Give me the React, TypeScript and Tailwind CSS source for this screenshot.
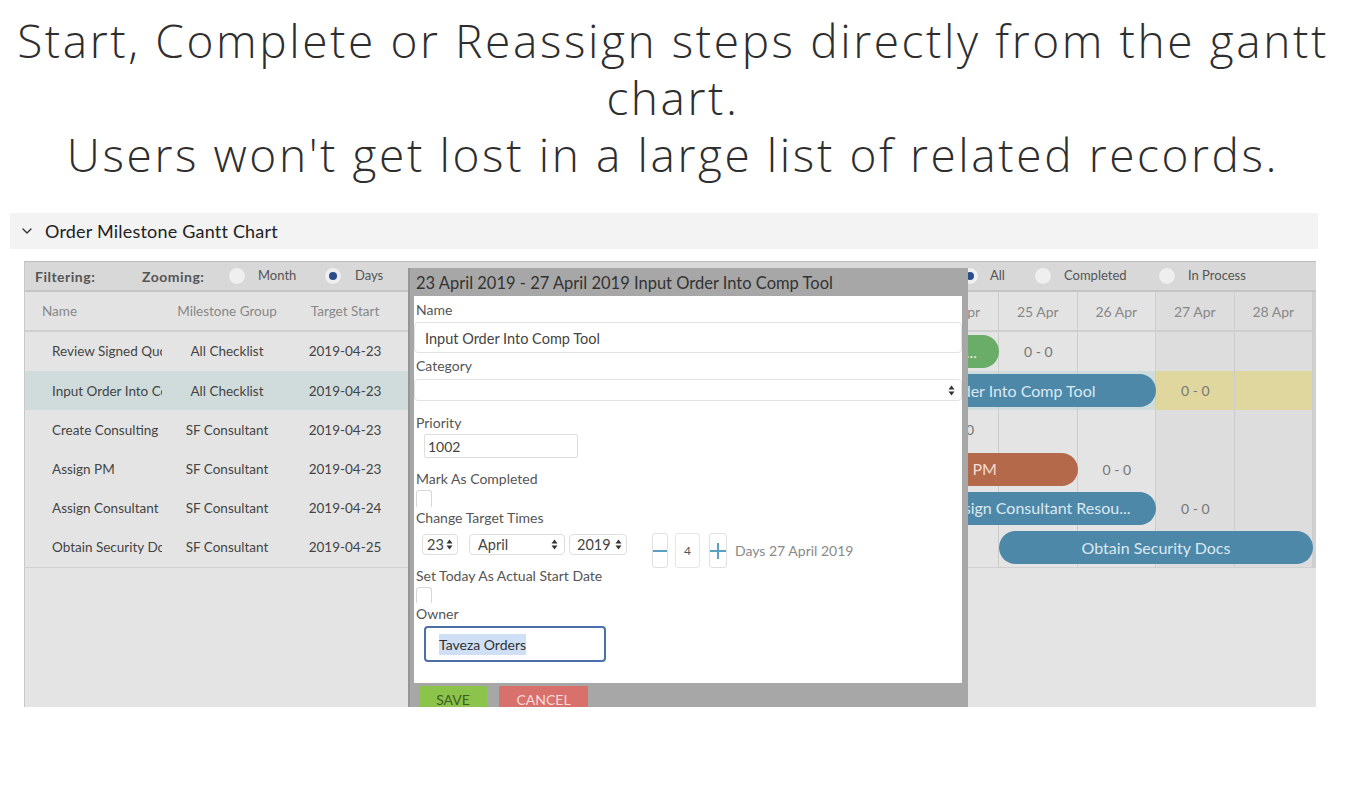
import { ChevronDown } from "lucide-react";

const rows = [
  { name: "Review Signed Quote", group: "All Checklist", start: "2019-04-23" },
  { name: "Input Order Into Comp Tool", group: "All Checklist", start: "2019-04-23" },
  { name: "Create Consulting Project", group: "SF Consultant", start: "2019-04-23" },
  { name: "Assign PM", group: "SF Consultant", start: "2019-04-23" },
  { name: "Assign Consultant Resources", group: "SF Consultant", start: "2019-04-24" },
  { name: "Obtain Security Docs", group: "SF Consultant", start: "2019-04-25" },
];

// col 1 = filler, col 2..11 = 19 Apr .. 28 Apr
const days = ["", "19 Apr", "20 Apr", "21 Apr", "22 Apr", "23 Apr", "24 Apr", "25 Apr", "26 Apr", "27 Apr", "28 Apr"];
const weekend = [false, false, true, true, false, false, false, false, false, true, true];

const colStart = ["", "col-start-1", "col-start-2", "col-start-3", "col-start-4", "col-start-5", "col-start-6", "col-start-7", "col-start-8", "col-start-9", "col-start-10", "col-start-11"];
const colSpan = ["", "col-span-1", "col-span-2", "col-span-3", "col-span-4", "col-span-5"];

type Bar = { start: number; span: number; color: string; text: string; label?: number };

const bars: Bar[] = [
  { start: 6, span: 2, color: "bg-[#6aad68] text-[#e3f1e2]", text: "Review Signed...", label: 8 },
  { start: 6, span: 4, color: "bg-[#4e88a8] text-[#dbe9f1]", text: "Input Order Into Comp Tool", label: 10 },
  { start: 6, span: 1, color: "bg-[#4e88a8] text-[#dbe9f1]", text: "Create...", label: 7 },
  { start: 6, span: 3, color: "bg-[#b4694b] text-[#f3dcd2]", text: "Assign PM", label: 9 },
  { start: 7, span: 3, color: "bg-[#4e88a8] text-[#dbe9f1]", text: "Assign Consultant Resou...", label: 10 },
  { start: 8, span: 4, color: "bg-[#4e88a8] text-[#dbe9f1]", text: "Obtain Security Docs" },
];

function Radio({ on }: { on?: boolean }) {
  return (
    <span className="w-[18px] h-[18px] shrink-0 rounded-full bg-[#efefef] border border-[#d6d6d6] flex items-center justify-center">
      {on && <span className="w-[8px] h-[8px] rounded-full bg-[#2b4d8c]" />}
    </span>
  );
}

function Arrows() {
  return (
    <svg width="7" height="11" viewBox="0 0 7 11" className="shrink-0">
      <path d="M3.5 0.5 L6.5 4.5 H0.5 Z" fill="#333" />
      <path d="M3.5 10.5 L6.5 6.5 H0.5 Z" fill="#333" />
    </svg>
  );
}

function Label({ children, className = "" }: { children: React.ReactNode; className?: string }) {
  return <div className={`h-[16px] leading-[16px] text-[14px] text-[#555] pl-[2px] whitespace-nowrap ${className}`}>{children}</div>;
}

function Modal() {
  return (
    <div className="absolute left-[383px] top-[7px] w-[560px] bg-[#a7a7a7] border-l-[2px] border-[#959595]">
      <div className="h-[28px] pt-[3px] leading-[25px] pl-[6px] text-[16.5px] text-[#333] whitespace-nowrap">
        23 April 2019 - 27 April 2019 Input Order Into Comp Tool
      </div>
      <div className="mx-[4px] mr-[6px] h-[387px] bg-white pt-[6px]">
        <Label>Name</Label>
        <div className="mt-[4px] h-[31px] border border-[#e2e2e2] rounded-[4px] flex items-center pl-[10px] pt-[2px] text-[14.5px] text-[#444]">
          Input Order Into Comp Tool
        </div>
        <Label className="mt-[5px]">Category</Label>
        <div className="mt-[5px] h-[22px] border border-[#e2e2e2] rounded-[4px] flex items-center justify-end pr-[6px]">
          <Arrows />
        </div>
        <Label className="mt-[14px]">Priority</Label>
        <div className="mt-[3px] ml-[10px] w-[154px] h-[24px] border border-[#dedede] rounded-[2px] flex items-center pl-[3px] text-[14px] text-[#444]">
          1002
        </div>
        <Label className="mt-[13px]">Mark As Completed</Label>
        <div className="mt-[3px] ml-[2px] w-[16px] h-[17px] border border-b-0 border-[#d8d8d8] rounded-t-[3px]" />
        <Label className="mt-[3px]">Change Target Times</Label>
        <div className="mt-[7px] h-[35px] flex items-start pl-[8px] text-[14.5px] text-[#444]">
          <div className="mt-[1px] w-[36px] h-[21px] border border-[#dedede] rounded-[4px] flex items-center justify-between pl-[4px] pr-[4px]">
            23 <Arrows />
          </div>
          <div className="ml-[11px] mt-[1px] w-[96px] h-[21px] border border-[#dedede] rounded-[4px] flex items-center justify-between pl-[8px] pr-[6px]">
            April <Arrows />
          </div>
          <div className="ml-[4px] mt-[1px] w-[58px] h-[21px] border border-[#dedede] rounded-[4px] flex items-center justify-between pl-[7px] pr-[4px]">
            2019 <Arrows />
          </div>
          <div className="ml-[25px] w-[16px] h-[35px] border border-[#e0e0e0] rounded-[3px] flex items-center justify-center">
            <span className="w-[14px] h-[2px] bg-[#5c9fc4]" />
          </div>
          <div className="ml-[7px] w-[25px] h-[35px] border border-[#e6e6e6] rounded-[3px] flex items-center justify-center text-[12px] text-[#555]">
            4
          </div>
          <div className="ml-[9px] w-[18px] h-[35px] border border-[#e0e0e0] rounded-[3px] flex items-center justify-center">
            <svg width="16" height="16" viewBox="0 0 16 16">
              <path d="M8 0 V16 M0 8 H16" stroke="#5c9fc4" strokeWidth="2" />
            </svg>
          </div>
          <div className="ml-[8px] h-[35px] flex items-center text-[14px] text-[#8a8a8a] whitespace-nowrap">Days 27 April 2019</div>
        </div>
        <Label>Set Today As Actual Start Date</Label>
        <div className="mt-[3px] ml-[2px] w-[16px] h-[16px] border border-b-0 border-[#d8d8d8] rounded-t-[3px]" />
        <Label className="mt-[3px]">Owner</Label>
        <div className="mt-[4px] ml-[10px] w-[182px] h-[36px] border-2 border-[#4b70a8] rounded-[4px] flex items-center pl-[13px] text-[14px] text-[#333]">
          <span className="bg-[#cfe0f6]">Taveza Orders</span>
        </div>
      </div>
      <div className="flex pl-[9px] pt-[3px] gap-[12px] pb-[10px]">
        <div className="w-[68px] h-[26px] bg-[#8cc44b] text-[#3f5e22] text-[14px] flex items-center justify-center">SAVE</div>
        <div className="w-[89px] h-[26px] bg-[#d8706b] text-[#f8dcda] text-[14px] flex items-center justify-center">CANCEL</div>
      </div>
    </div>
  );
}

export default function App() {
  return (
    <div className="bg-white min-h-[800px] font-['Lato',sans-serif]">
      <div className="pt-[12px] pr-[12px] text-center text-[46px] leading-[57px] tracking-[2.6px] text-[#2e2e2e] font-['Open_Sans',sans-serif] font-light">
        Start, Complete or Reassign steps directly from the gantt
        <br />
        chart.
        <br />
        Users won't get lost in a large list of related records.
      </div>

      <div className="mt-[30px] ml-[10px] w-[1308px] h-[36px] bg-[#f3f3f3] flex items-center pl-[9px] gap-[10px] text-[18px] tracking-[0.2px] text-[#222]">
        <ChevronDown size={16} strokeWidth={2} className="text-[#333]" />
        Order Milestone Gantt Chart
      </div>

      <div className="relative mt-[12px] ml-[24px] w-[1292px] h-[446px] overflow-hidden bg-[#e4e4e4] border-l border-[#c9c9c9]">
        {/* toolbar */}
        <div className="h-[31px] bg-[#d8d8d8] border-t border-[#bdbdbd] border-b-2 border-b-[#c4c4c4] flex items-center pl-[10px] text-[13px] text-[#555] whitespace-nowrap">
          <span className="w-[107px] font-bold text-[14px] tracking-[0.5px]">Filtering:</span>
          <span className="w-[86px] font-bold text-[14px] tracking-[0.5px]">Zooming:</span>
          <Radio />
          <span className="ml-[12px] w-[66px]">Month</span>
          <Radio on />
          <span className="ml-[13px] w-[606px]">Days</span>
          <Radio on />
          <span className="ml-[11px] w-[44px]">All</span>
          <Radio />
          <span className="ml-[12px] w-[94px]">Completed</span>
          <Radio />
          <span className="ml-[12px]">In Process</span>
        </div>

        {/* header row */}
        <div className="flex h-[40px] border-b-2 border-[#cfcfcf] bg-[#e3e3e3] text-[13.5px] text-[#888]">
          <div className="w-[387px] flex items-center">
            <div className="w-[140px] pl-[17px]">Name</div>
            <div className="w-[124px] text-center whitespace-nowrap">Milestone Group</div>
            <div className="w-[112px] text-center">Target Start</div>
          </div>
          <div className="grid grid-cols-[116px_repeat(10,78.5px)] border-r-[3px] border-[#d0d0d0] text-[14px]">
            {days.map((d, i) => (
              <div
                key={i}
                className={`flex items-center justify-center border-r border-[#cdcdcd] whitespace-nowrap ${weekend[i] ? "bg-[#dcdddc]" : ""}`}
              >
                {d}
              </div>
            ))}
          </div>
        </div>

        {/* rows */}
        <div className="border-b border-[#d0d0d0]">
          {rows.map((r, ri) => {
            const b = bars[ri];
            const sel = ri === 1;
            return (
              <div key={r.name} className={`flex h-[39.2px] text-[13.5px] text-[#444] ${sel ? "bg-[#cfdcdb]" : ""}`}>
                <div className="w-[387px] flex items-center">
                  <div className="w-[140px] pl-[27px]">
                    <div className="w-[110px] whitespace-nowrap overflow-hidden">{r.name}</div>
                  </div>
                  <div className="w-[124px] text-center whitespace-nowrap">{r.group}</div>
                  <div className="w-[112px] text-center">{r.start}</div>
                </div>
                <div className="grid grid-cols-[116px_repeat(10,78.5px)] grid-rows-[39.2px] border-r-[3px] border-[#d0d0d0]">
                  {days.map((_, i) => (
                    <div
                      key={i}
                      className={`row-start-1 ${colStart[i + 1]} border-r border-[#cdcdcd] ${
                        sel && i >= 9 ? "bg-[#e0d79f]" : weekend[i] ? "bg-[#dcdddc]" : sel ? "bg-[#cfdcdb]" : ""
                      }`}
                    />
                  ))}
                  <div
                    className={`row-start-1 ${colStart[b.start]} ${colSpan[b.span]} self-center h-[33px] rounded-full ${b.color} text-[16px] flex items-center justify-center whitespace-nowrap overflow-hidden`}
                  >
                    {b.text}
                  </div>
                  {b.label && (
                    <div className={`row-start-1 ${colStart[b.label]} flex items-center justify-center text-[14px] text-[#777]`}>
                      0 - 0
                    </div>
                  )}
                </div>
              </div>
            );
          })}
        </div>

        <Modal />
      </div>
    </div>
  );
}
